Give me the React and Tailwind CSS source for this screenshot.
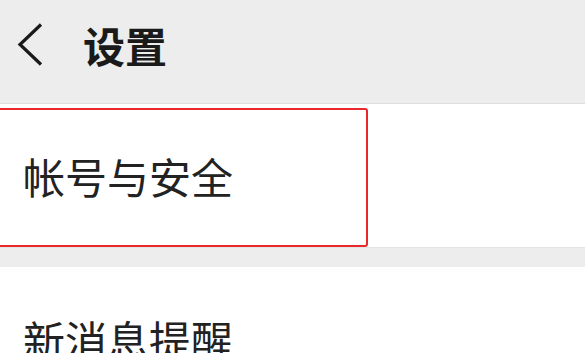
import { useState } from 'react';

const font = { fontFamily: '"Noto Sans CJK SC", "Noto Sans", sans-serif' };

function BackIcon() {
  return (
    <svg width="27" height="43" viewBox="0 0 27 43" fill="none" className="shrink-0">
      <polyline points="24,1.5 3,21.5 24,41.5" stroke="#1a1a1a" strokeWidth="3.2" strokeLinejoin="miter" />
    </svg>
  );
}

function Row({ label, children }) {
  return (
    <div className="relative flex h-[143px] items-center bg-white pl-[23px]">
      <span className="text-[42px] leading-none text-[#222]">{label}</span>
      {children}
    </div>
  );
}

export default function App() {
  const [active] = useState('account');

  return (
    <div className="h-[353px] w-[585px] overflow-hidden bg-[#ededed]" style={font}>
      <header className="flex h-[104px] items-center border-b border-[#dedede] bg-[#ededed] pb-[14px] pl-[17px]">
        <BackIcon />
        <h1 className="ml-[39px] text-[42px] font-bold leading-none text-[#1a1a1a]">设置</h1>
      </header>

      <Row label="帐号与安全">
        {active === 'account' && (
          <div className="absolute left-[-6px] top-[4px] h-[139px] w-[374px] rounded-[3px] border-2 border-[#e8282b]" />
        )}
      </Row>

      <div className="h-[20px] border-t border-[#e4e4e4] bg-[#ededed]" />

      <Row label="新消息提醒" />
    </div>
  );
}
